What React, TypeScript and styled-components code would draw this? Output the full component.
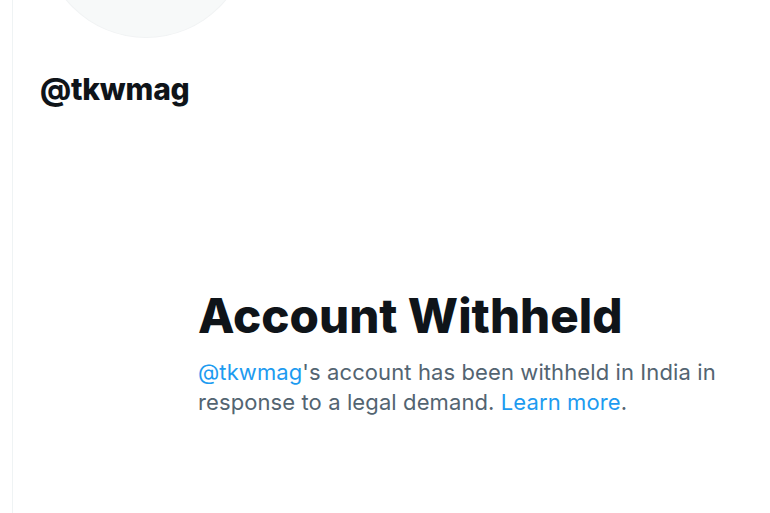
import React from "react";
import styled, { createGlobalStyle } from "styled-components";

const Global = createGlobalStyle`
  html, body { margin: 0; padding: 0; background: #ffffff; }
  body { font-family: Inter, "Liberation Sans", Arial, sans-serif; -webkit-font-smoothing: antialiased; }
`;

const Page = styled.div`
  width: 770px;
  height: 513px;
  overflow: hidden;
  padding-left: 12px;
  box-sizing: border-box;
  display: flex;
`;

const Column = styled.main`
  flex: 1;
  border-left: 1.5px solid #eff3f4;
  display: flex;
  flex-direction: column;
  padding-left: 27px;
`;

const Avatar = styled.div`
  width: 206px;
  height: 206px;
  border-radius: 50%;
  background: #f7f9f9;
  margin-top: -169px;
  margin-left: 3px;
  box-shadow: 0 0 0 1px #f1f3f4;
`;

const Handle = styled.h2`
  margin: 35px 0 0 0;
  font-size: 30px;
  line-height: 34px;
  font-weight: 800;
  color: #0f1419;
  letter-spacing: -0.2px;
`;

const Notice = styled.section`
  margin: 182px 0 0 158px;
  width: 545px;
`;

const Title = styled.h1`
  margin: 0;
  font-size: 47.5px;
  line-height: 56px;
  font-weight: 800;
  color: #0f1419;
  letter-spacing: 0px;
`;

const Body = styled.p`
  margin: 13px 0 0 0;
  font-size: 22px;
  line-height: 30px;
  color: #536471;
  font-weight: 400;
  letter-spacing: 0.1px;
`;

const Link = styled.a`
  color: #1d9bf0;
  text-decoration: none;
`;

export default function App() {
  return (
    <>
      <Global />
      <Page>
        <Column>
          <Avatar />
          <Handle>@tkwmag</Handle>
          <Notice>
            <Title>Account Withheld</Title>
            <Body>
              <Link>@tkwmag</Link>'s account has been withheld in India in response to a legal demand. <Link>Learn more</Link>.
            </Body>
          </Notice>
        </Column>
      </Page>
    </>
  );
}
